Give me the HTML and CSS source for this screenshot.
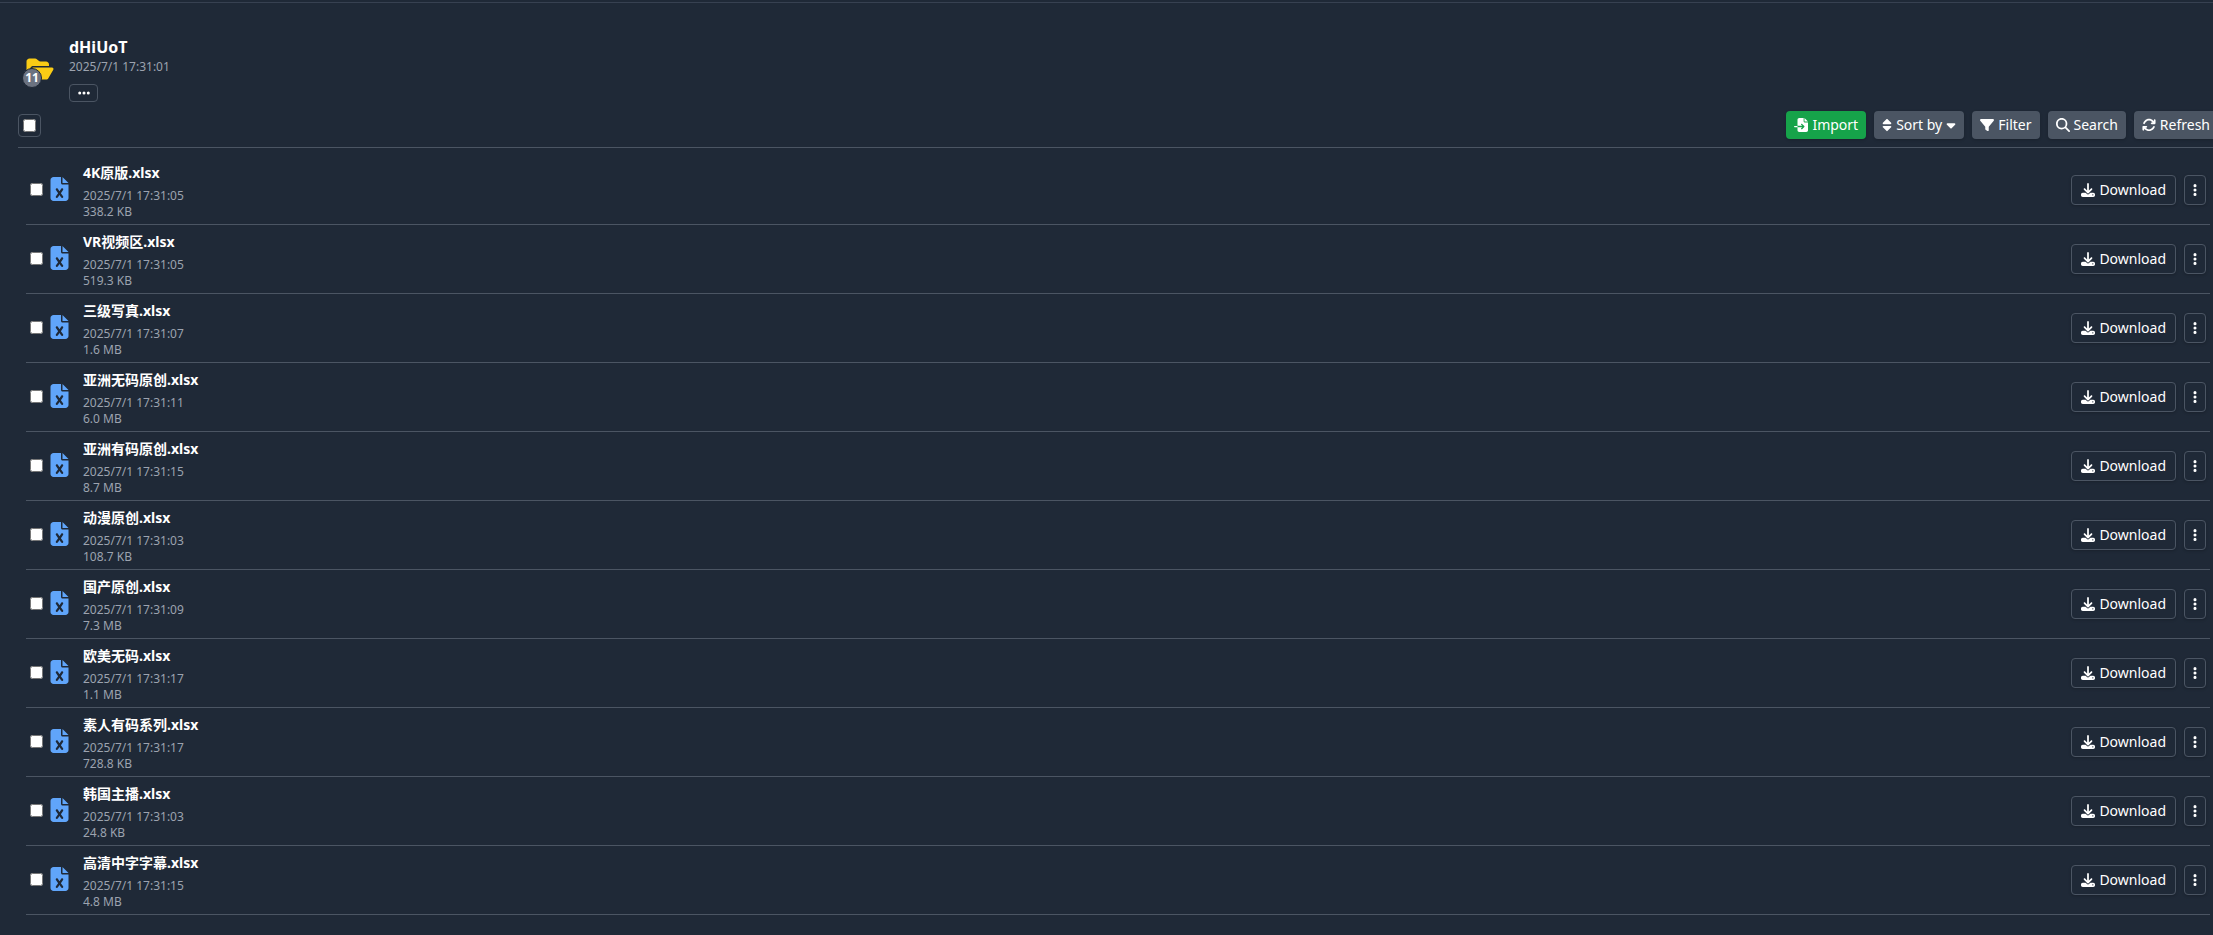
FILE: index.html
```html
<!DOCTYPE html>
<html lang="en">
<head>
  <meta charset="UTF-8" />
  <meta name="viewport" content="width=device-width, initial-scale=1.0"/>
  <title>dHiUoT</title>
  <link rel="stylesheet" href="styles.css">
</head>
<body>
  <svg class="sprite" aria-hidden="true">
    <symbol id="file-excel" viewBox="0 0 384 512"><path d="M64 0C28.700 0 0 28.700 0 64V448c0 35.300 28.700 64 64 64H320c35.300 0 64-28.700 64-64V160H256c-17.700 0-32-14.300-32-32V0H64zM256 0V128H384L256 0zM155.700 250.200L192 302.100l36.300-51.900c7.600-10.900 22.600-13.500 33.400-5.900s13.500 22.600 5.900 33.400L221.300 344l46.400 66.200c7.600 10.900 5 25.800-5.900 33.400s-25.800 5-33.400-5.900L192 385.800l-36.300 51.900c-7.600 10.900-22.600 13.500-33.400 5.900s-13.500-22.600-5.900-33.400L162.700 344l-46.400-66.200c-7.600-10.900-5-25.800 5.900-33.400s25.800-5 33.400 5.900z"/></symbol>
    <symbol id="download" viewBox="0 0 512 512"><path d="M288 32c0-17.700-14.300-32-32-32s-32 14.300-32 32V274.700l-73.400-73.400c-12.500-12.500-32.800-12.500-45.300 0s-12.500 32.800 0 45.300l128 128c12.500 12.500 32.800 12.500 45.300 0l128-128c12.500-12.500 12.500-32.800 0-45.300s-32.800-12.500-45.300 0L288 274.700V32zM64 352c-35.300 0-64 28.700-64 64v32c0 35.300 28.700 64 64 64H448c35.300 0 64-28.700 64-64V416c0-35.300-28.700-64-64-64H346.500l-45.300 45.300c-25 25-65.500 25-90.500 0L165.500 352H64zm368 56a24 24 0 1 1 0 48 24 24 0 1 1 0-48z"/></symbol>
    <symbol id="more" viewBox="0 0 128 512"><path d="M64 360a56 56 0 1 0 0 112 56 56 0 1 0 0-112zm0-160a56 56 0 1 0 0 112 56 56 0 1 0 0-112zM120 96A56 56 0 1 0 8 96a56 56 0 1 0 112 0z"/></symbol>
    <symbol id="dots" viewBox="0 0 448 512"><path d="M8 256a56 56 0 1 1 112 0A56 56 0 1 1 8 256zm160 0a56 56 0 1 1 112 0 56 56 0 1 1-112 0zm216-56a56 56 0 1 1 0 112 56 56 0 1 1 0-112z"/></symbol>
    <symbol id="folder" viewBox="0 0 576 512"><path d="M88.700 223.800L0 375.800V96C0 60.700 28.700 32 64 32H181.500c17 0 33.300 6.700 45.300 18.700l26.500 26.500c12 12 28.300 18.700 45.300 18.700H416c35.300 0 64 28.700 64 64v32H144c-22.800 0-43.800 12.100-55.300 31.800zm27.600 16.100C122.100 230 132.600 224 144 224H544c11.500 0 22 6.100 27.700 16.100s5.700 22.200-.1 32.100l-112 192C453.900 474 443.400 480 432 480H32c-11.500 0-22-6.100-27.700-16.100s-5.700-22.200 .1-32.100l112-192z"/></symbol>
    <symbol id="import" viewBox="0 0 512 512"><path d="M128 64c0-35.300 28.700-64 64-64H352V128c0 17.700 14.300 32 32 32H512V448c0 35.300-28.700 64-64 64H192c-35.300 0-64-28.700-64-64V336H302.100l-39 39c-9.400 9.400-9.400 24.600 0 33.900s24.600 9.400 33.900 0l80-80c9.400-9.400 9.400-24.600 0-33.900l-80-80c-9.400-9.400-24.600-9.400-33.900 0s-9.400 24.600 0 33.900l39 39H128V64zm0 224v48H24c-13.300 0-24-10.700-24-24s10.700-24 24-24H128zM512 128H384V0L512 128z"/></symbol>
    <symbol id="sort" viewBox="0 0 320 512"><path d="M137.400 41.400c12.500-12.500 32.800-12.500 45.300 0l128 128c9.200 9.200 11.900 22.900 6.900 34.900s-16.600 19.800-29.600 19.800H32c-12.900 0-24.600-7.800-29.600-19.800s-2.200-25.700 6.900-34.900l128-128zm0 429.300l-128-128c-9.200-9.200-11.900-22.900-6.900-34.900s16.600-19.800 29.600-19.800H288c12.900 0 24.600 7.800 29.600 19.800s2.200 25.700-6.900 34.900l-128 128c-12.500 12.500-32.800 12.500-45.300 0z"/></symbol>
    <symbol id="caret" viewBox="0 0 320 512"><path d="M137.400 374.600c12.500 12.500 32.800 12.500 45.300 0l128-128c9.200-9.200 11.900-22.900 6.900-34.900s-16.600-19.800-29.600-19.800L32 192c-12.900 0-24.600 7.800-29.600 19.800s-2.200 25.700 6.900 34.900l128 128z"/></symbol>
    <symbol id="filter" viewBox="0 0 512 512"><path d="M3.900 54.900C10.500 40.900 24.500 32 40 32H472c15.500 0 29.500 8.900 36.100 22.900s4.600 30.500-5.200 42.500L320 320.900V448c0 12.100-6.800 23.200-17.700 28.600s-23.800 4.300-33.500-3l-64-48c-8.100-6-12.800-15.500-12.800-25.600V320.900L9 97.300C-.7 85.400-2.800 68.800 3.900 54.900z"/></symbol>
    <symbol id="search" viewBox="0 0 512 512"><path d="M416 208c0 45.900-14.900 88.300-40 122.700L502.600 457.400c12.500 12.500 12.500 32.800 0 45.300s-32.800 12.500-45.300 0L330.700 376c-34.400 25.200-76.800 40-122.700 40C93.100 416 0 322.900 0 208S93.100 0 208 0S416 93.100 416 208zM208 352a144 144 0 1 0 0-288 144 144 0 1 0 0 288z"/></symbol>
    <symbol id="refresh" viewBox="0 0 512 512"><path d="M105.100 202.600c7.700-21.800 20.200-42.300 37.800-59.800c62.500-62.500 163.800-62.500 226.300 0L386.300 160H352c-17.700 0-32 14.300-32 32s14.300 32 32 32H463.500c17.700 0 32-14.300 32-32V80c0-17.700-14.300-32-32-32s-32 14.300-32 32v35.200L414.400 97.600c-87.500-87.500-229.300-87.500-316.800 0C73.200 122 55.600 150.700 44.800 181.400c-5.900 16.700 2.900 34.900 19.500 40.800s34.900-2.900 40.800-19.500zM39 289.300c-5 1.500-9.800 4.200-13.700 8.200c-4 4-6.700 8.800-8.100 14c-.8 2.900-1.200 5.900-1.200 8.900V432c0 17.700 14.300 32 32 32s32-14.300 32-32V396.900l17.600 17.500c87.500 87.400 229.300 87.400 316.700 0c24.400-24.400 42.100-53.100 52.900-83.700c5.900-16.700-2.900-34.900-19.500-40.800s-34.900 2.900-40.800 19.500c-7.700 21.800-20.200 42.300-37.800 59.800c-62.500 62.500-163.800 62.500-226.300 0L125.600 352H160c17.700 0 32-14.300 32-32s-14.300-32-32-32H48.400c-3.200 0-6.400 .4-9.400 1.300z"/></symbol>
  </svg>

  <main class="panel">
    <header class="folder-header">
      <div class="folder-icon">
        <svg><use href="#folder"/></svg>
        <span class="count">11</span>
      </div>
      <div>
        <h1>dHiUoT</h1>
        <p class="meta">2025/7/1 17:31:01</p>
        <button class="btn-dots" type="button" aria-label="More"><svg class="icon"><use href="#dots"/></svg></button>
      </div>
    </header>

    <div class="toolbar">
      <label class="select-all"><input type="checkbox" aria-label="Select all"></label>
      <div class="actions">
        <button class="btn btn-green" type="button"><svg class="icon"><use href="#import"/></svg>Import</button>
        <button class="btn" type="button"><svg class="icon narrow"><use href="#sort"/></svg>Sort by<svg class="icon narrow"><use href="#caret"/></svg></button>
        <button class="btn" type="button"><svg class="icon"><use href="#filter"/></svg>Filter</button>
        <button class="btn" type="button"><svg class="icon"><use href="#search"/></svg>Search</button>
        <button class="btn" type="button"><svg class="icon"><use href="#refresh"/></svg>Refresh</button>
      </div>
    </div>

    <ul class="files" id="files"></ul>
  </main>

  <script src="script.js"></script>
</body>
</html>
```
FILE: styles.css
```css
:root {
  --bg: #1f2937;
  --line: #4b5563;
  --muted: #9ca3af;
}

* {
  box-sizing: border-box;
}

body {
  margin: 0;
  background: var(--bg);
  color: white;
  font-family: "Noto Sans", "Noto Sans CJK SC", sans-serif;
  font-size: 14px;
  line-height: 20px;
  overflow-x: hidden;
}

h1, p, ul {
  margin: 0;
  padding: 0;
}

button {
  font: inherit;
  color: inherit;
  cursor: pointer;
}

input[type="checkbox"] {
  width: 13px;
  height: 13px;
  margin: 0;
}

.sprite {
  position: absolute;
  width: 0;
  height: 0;
}

.icon {
  width: 14px;
  height: 14px;
  fill: currentColor;
}

.icon.narrow {
  width: 10px;
}

.panel {
  margin-top: 2px;
  margin-right: -5px;
  padding-left: 18px;
  border-top: 1px solid #374151;
}

.folder-header {
  display: flex;
  align-items: center;
  gap: 15px;
  padding: 32px 0 0 8px;
}

.folder-icon {
  position: relative;
  width: 28px;
  height: 24px;
}

.folder-icon svg {
  width: 28px;
  height: 24px;
  fill: #facc15;
}

.count {
  position: absolute;
  left: -4px;
  bottom: -7px;
  width: 20px;
  height: 20px;
  border: 1px solid var(--bg);
  border-radius: 50%;
  background: #6b7280;
  font-size: 12px;
  font-weight: 700;
  line-height: 18px;
  text-align: center;
}

h1 {
  font-size: 16px;
  font-weight: 700;
  line-height: 24px;
}

.meta {
  color: var(--muted);
  font-size: 12px;
  line-height: 16px;
}

.btn-dots {
  display: flex;
  align-items: center;
  justify-content: center;
  width: 29px;
  height: 18px;
  margin-top: 9px;
  padding: 0;
  border: 1px solid var(--line);
  border-radius: 4px;
  background: none;
}

.btn-dots .icon {
  width: 12px;
}

.toolbar {
  display: flex;
  justify-content: space-between;
  align-items: center;
  margin-top: 9px;
  padding-bottom: 8px;
  border-bottom: 1px solid var(--line);
}

.select-all {
  display: flex;
  padding: 4px;
  border: 1px solid var(--line);
  border-radius: 4px;
}

.actions, .row-actions {
  display: flex;
  gap: 8px;
}

.btn {
  display: flex;
  align-items: center;
  gap: 4px;
  padding: 4px 8px;
  border: none;
  border-radius: 4px;
  background: var(--line);
  box-shadow: 0 1px 3px rgba(0, 0, 0, 0.2);
}

.btn-green {
  background: #16a34a;
}

.btn-outline {
  padding: 4px 9px;
  border: 1px solid var(--line);
  background: none;
}

.btn-more {
  padding: 4px 8px;
}

.btn-more .icon {
  width: 4px;
}

.files {
  margin: 8px 8px 0;
  list-style: none;
}

.file {
  display: flex;
  align-items: center;
  height: 69px;
  padding: 0 4px;
  border-bottom: 1px solid var(--line);
}

.file-label {
  display: flex;
  align-items: center;
  gap: 7px;
  padding-bottom: 2px;
}

.file-icon {
  width: 19px;
  height: 24px;
  fill: #60a5fa;
}

.file-info {
  margin-left: 14px;
  padding-top: 3px;
}

.file-name {
  margin-bottom: 5px;
  font-weight: 700;
}

.row-actions {
  margin-left: auto;
}
```
FILE: script.js
```js
const files = [
  ["4K原版.xlsx", "2025/7/1 17:31:05", "338.2 KB"],
  ["VR视频区.xlsx", "2025/7/1 17:31:05", "519.3 KB"],
  ["三级写真.xlsx", "2025/7/1 17:31:07", "1.6 MB"],
  ["亚洲无码原创.xlsx", "2025/7/1 17:31:11", "6.0 MB"],
  ["亚洲有码原创.xlsx", "2025/7/1 17:31:15", "8.7 MB"],
  ["动漫原创.xlsx", "2025/7/1 17:31:03", "108.7 KB"],
  ["国产原创.xlsx", "2025/7/1 17:31:09", "7.3 MB"],
  ["欧美无码.xlsx", "2025/7/1 17:31:17", "1.1 MB"],
  ["素人有码系列.xlsx", "2025/7/1 17:31:17", "728.8 KB"],
  ["韩国主播.xlsx", "2025/7/1 17:31:03", "24.8 KB"],
  ["高清中字字幕.xlsx", "2025/7/1 17:31:15", "4.8 MB"]
];

document.getElementById("files").innerHTML = files.map(([name, date, size], i) => `
  <li class="file">
    <label class="file-label" for="file-${i}">
      <input type="checkbox" id="file-${i}" aria-label="${name}">
      <svg class="file-icon"><use href="#file-excel"/></svg>
    </label>
    <div class="file-info">
      <p class="file-name" lang="zh-CN">${name}</p>
      <p class="meta">${date}</p>
      <p class="meta">${size}</p>
    </div>
    <div class="row-actions">
      <button class="btn btn-outline" type="button"><svg class="icon"><use href="#download"/></svg>Download</button>
      <button class="btn btn-outline btn-more" type="button" aria-label="More"><svg class="icon"><use href="#more"/></svg></button>
    </div>
  </li>`).join("");
```
